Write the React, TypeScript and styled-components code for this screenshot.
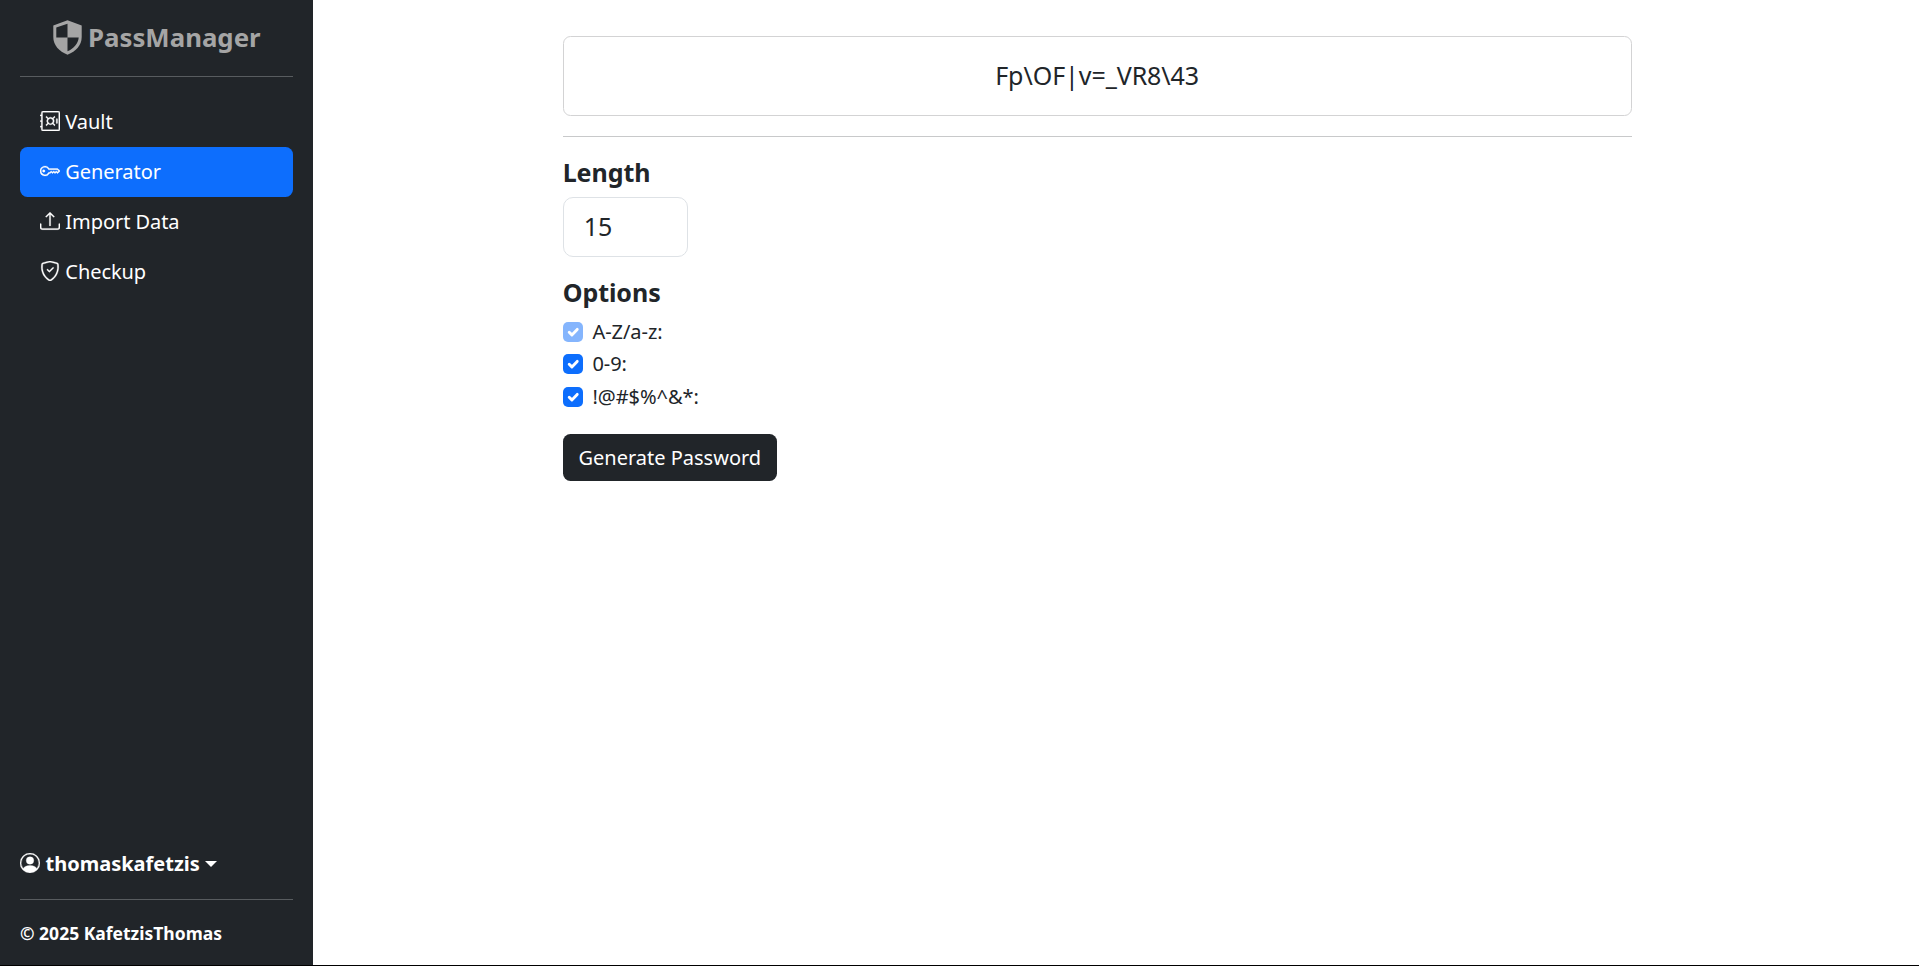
import React from "react";
import styled, { createGlobalStyle } from "styled-components";
import { BsSafe, BsKey, BsUpload, BsShieldCheck, BsPersonCircle } from "react-icons/bs";

const GlobalStyle = createGlobalStyle`
  *, *::before, *::after { box-sizing: border-box; }
  body {
    margin: 0;
    background: #fff;
    color: #212529;
    font-family: "Noto Sans", "Liberation Sans", sans-serif;
    font-size: 20px;
    line-height: 30px;
  }
`;

const Page = styled.div`
  display: flex;
  height: 100vh;
  border-bottom: 1px solid #000;
  overflow: hidden;
`;

const Sidebar = styled.aside`
  width: 313px;
  flex: none;
  display: flex;
  flex-direction: column;
  padding: 0 20px;
  background: #212529;
  color: #fff;
`;

const Brand = styled.a`
  display: flex;
  align-items: center;
  height: 76px;
  padding: 0 0 2px 33px;
  color: #a5a5a5;
  font-size: 25.8px;
  font-weight: 700;

  svg { flex: none; margin-right: 6px; }
`;

const Rule = styled.hr<{ $light?: boolean }>`
  width: 100%;
  flex: none;
  height: 1px;
  margin: 0;
  border: 0;
  background: ${(p) => (p.$light ? "#c8c9ca" : "#585c5f")};
`;

const Nav = styled.nav`
  display: flex;
  flex-direction: column;
  margin: 20px 0 auto;
`;

const NavLink = styled.a<{ $active?: boolean }>`
  height: 50px;
  padding: 10px 20px;
  border-radius: 7.5px;
  background: ${(p) => (p.$active ? "#0d6efd" : "transparent")};
  color: #fff;
  letter-spacing: -0.06px;

  svg { vertical-align: -2px; margin-right: 5.3px; stroke-width: 0.25px; }
`;

const UserMenu = styled.a`
  display: flex;
  align-items: center;
  height: 30px;
  margin-bottom: 20px;
  font-weight: 700;

  svg { margin: 0 5.5px 2px 0; stroke-width: 0.25px; }

  &::after {
    content: "";
    margin-left: 5.5px;
    border-top: 6px solid;
    border-left: 6px solid transparent;
    border-right: 6px solid transparent;
  }
`;

const Copyright = styled.p`
  margin: 18px 0 17px;
  font-size: 17.5px;
  font-weight: 700;
`;

const Main = styled.main`
  flex: 1;
  display: flex;
  justify-content: center;
  padding: 36px 37.7px 0 0;
`;

const Content = styled.section`
  width: 1069px;
`;

const PasswordCard = styled.div`
  display: flex;
  align-items: center;
  justify-content: center;
  height: 80px;
  margin-bottom: 20px;
  padding-bottom: 2px;
  border: 1px solid #d3d3d4;
  border-radius: 7.5px;
  font-size: 25px;
  letter-spacing: -0.06px;
`;

const Heading = styled.h2`
  margin: 0;
  font-size: 25px;
  line-height: 30px;
  font-weight: 700;
  letter-spacing: -0.05px;
`;

const LengthInput = styled.input`
  display: block;
  width: 125px;
  height: 60px;
  padding: 9px 20px 11px;
  border: 1px solid #dee2e6;
  border-radius: 10px;
  background: #fff;
  color: inherit;
  font: inherit;
  font-size: 25px;
`;

const Field = styled.div`
  padding-top: 20px;
  ${Heading} { margin-bottom: 10px; }
`;

const Options = styled.div`
  display: flex;
  flex-direction: column;
  align-items: flex-start;
  padding-top: 20px;
  ${Heading} { margin-bottom: 8.7px; }
`;

const Option = styled.label`
  display: flex;
  align-items: center;
  gap: 9.8px;
  height: 32.5px;
  letter-spacing: -0.05px;
`;

const CheckBox = styled.span<{ $disabled?: boolean }>`
  width: 20px;
  height: 20px;
  border-radius: 5px;
  background: #0d6efd;
  opacity: ${(p) => (p.$disabled ? 0.5 : 1)};

  svg { display: block; }
`;

const GenerateButton = styled.button`
  height: 47px;
  margin-top: 21px;
  padding: 0 15.8px;
  border: 0;
  border-radius: 7.5px;
  background: #212529;
  color: #fff;
  font: inherit;
`;

const ShieldLogo = () => (
  <svg width="29" height="35" viewBox="0 0 29 35">
    <path fill="currentColor" d="M14.5 .3 28.7 5.5V17c0 8-5.7 14.5-14.2 17.7C6 31.5.3 25 .3 17V5.5Z" />
    <path fill="#212529" d="M14.5 3.7V17.5H3.3V7.6ZM14.5 17.5H25.7C25.2 23.5 21 28.5 14.5 31.3Z" />
  </svg>
);

const links = [
  { label: "Vault", Icon: BsSafe },
  { label: "Generator", Icon: BsKey, active: true },
  { label: "Import Data", Icon: BsUpload },
  { label: "Checkup", Icon: BsShieldCheck },
];

const options = [
  { label: "A-Z/a-z:", disabled: true },
  { label: "0-9:" },
  { label: "!@#$%^&*:" },
];

export default function App() {
  return (
    <>
      <GlobalStyle />
      <Page>
        <Sidebar>
          <Brand><ShieldLogo />PassManager</Brand>
          <Rule />
          <Nav>
            {links.map(({ label, Icon, active }) => (
              <NavLink key={label} $active={active}><Icon size={20} />{label}</NavLink>
            ))}
          </Nav>
          <UserMenu><BsPersonCircle size={20} />thomaskafetzis</UserMenu>
          <Rule />
          <Copyright>© 2025 KafetzisThomas</Copyright>
        </Sidebar>
        <Main>
          <Content>
            <PasswordCard>{"Fp\\OF|v=_VR8\\43"}</PasswordCard>
            <Rule $light />
            <Field>
              <Heading>Length</Heading>
              <LengthInput defaultValue="15" />
            </Field>
            <Options>
              <Heading>Options</Heading>
              {options.map(({ label, disabled }) => (
                <Option key={label}>
                  <CheckBox $disabled={disabled}>
                    <svg width="20" height="20" viewBox="0 0 20 20">
                      <path fill="none" stroke="#fff" strokeLinecap="round" strokeLinejoin="round" strokeWidth="2.9" d="m6.2 10.2 2.7 2.7 5.3-5.5" />
                    </svg>
                  </CheckBox>
                  {label}
                </Option>
              ))}
            </Options>
            <GenerateButton>Generate Password</GenerateButton>
          </Content>
        </Main>
      </Page>
    </>
  );
}
